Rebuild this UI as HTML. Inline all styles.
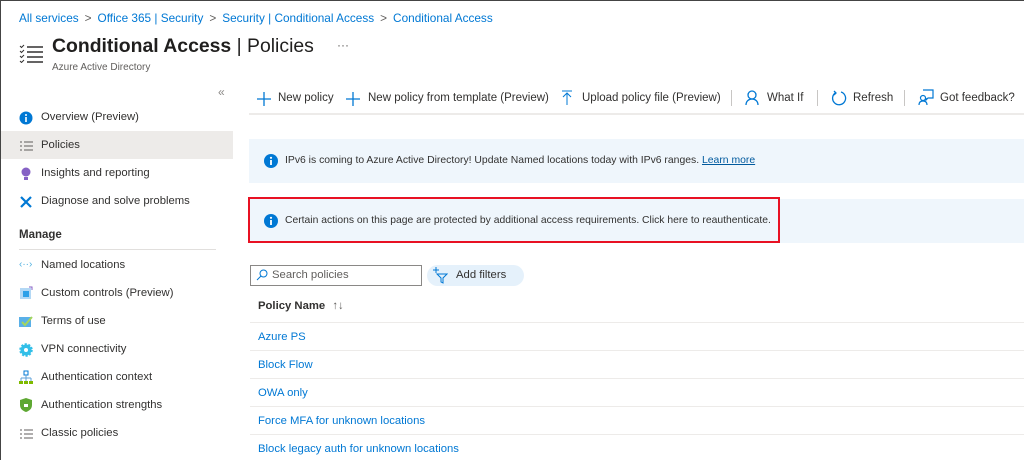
<!DOCTYPE html>
<html><head><style>
*{margin:0;padding:0;box-sizing:border-box}
body{width:1024px;height:460px;overflow:hidden;background:#fff;font-family:"Segoe UI","Liberation Sans",sans-serif;color:#323130;position:relative;border-left:1px solid #444;border-top:1px solid #444}
.a{position:absolute;white-space:nowrap}
.bc{top:10px;left:18px;font-size:11.8px;color:#0078d4}
.bc span{color:#605e5c;margin:0 6px}
.nav{font-size:11.3px;color:#323130}
.tb{top:91px;font-size:11.5px;color:#323130}
.blue{color:#0078d4}
.row{left:257px;font-size:11.3px;color:#0078d4}
.ln{position:absolute;height:1px;background:#edebe9}
</style></head><body>
<div class="a bc">All services<span>&gt;</span>Office 365 | Security<span>&gt;</span>Security | Conditional Access<span>&gt;</span>Conditional Access</div>
<svg class="a" style="left:18px;top:42px" width="26" height="20" viewBox="0 0 26 20" fill="none" stroke="#323130" stroke-width="1.5"><path d="M1 3l1.5 1.5L5 2M1 8l1.5 1.5L5 7M1 13l1.5 1.5L5 12M1 18l1.5 1.5L5 17" stroke-width="1"/><path d="M8 4h16M8 9h16M8 14h16M8 19h16"/></svg>
<div class="a" style="left:51px;top:34px;font-size:19.4px;font-weight:bold;color:#201f1e">Conditional Access <span style="font-weight:normal">| Policies</span></div>
<div class="a" style="left:336px;top:37px;font-size:12px;color:#605e5c">···</div>
<div class="a" style="left:51px;top:61px;font-size:10px;color:#605e5c">Azure Active Directory</div>
<div class="a" style="left:217px;top:84px;font-size:12px;color:#8a8886">«</div>
<div class="a" style="left:0;top:130px;width:232px;height:28px;background:#edebe9"></div>
<svg class="a" style="left:18px;top:110px" width="14" height="14"><circle cx="7" cy="7" r="6.5" fill="#0078d4"/><rect x="6.2" y="6" width="1.6" height="5" fill="#fff"/><circle cx="7" cy="4" r="1" fill="#fff"/></svg>
<div class="a nav" style="left:40px;top:110px">Overview (Preview)</div>
<svg class="a" style="left:18px;top:139px" width="14" height="12" stroke="#605e5c"><path d="M5 2h9M5 6h9M5 10h9M1 2h2M1 6h2M1 10h2"/></svg>
<div class="a nav" style="left:40px;top:138px">Policies</div>
<svg class="a" style="left:20px;top:166px" width="10" height="14"><circle cx="5" cy="5" r="4.5" fill="#8661c5"/><rect x="3" y="10" width="4" height="3" fill="#8661c5"/></svg>
<div class="a nav" style="left:40px;top:166px">Insights and reporting</div>
<svg class="a" style="left:18px;top:194px" width="14" height="14" stroke="#0078d4" stroke-width="2.2"><path d="M2 2l10 10M12 2L2 12"/></svg>
<div class="a nav" style="left:40px;top:194px">Diagnose and solve problems</div>
<div class="a" style="left:18px;top:228px;font-size:11.5px;font-weight:bold">Manage</div>
<div class="ln" style="left:18px;top:248px;width:197px;background:#e1dfdd"></div>
<div class="a" style="left:18px;top:258px;font-size:10px;color:#50b0e0">‹··›</div>
<div class="a nav" style="left:40px;top:258px">Named locations</div>
<svg class="a" style="left:18px;top:285px" width="14" height="14"><rect x="1" y="2" width="11" height="11" fill="#b3d8f5"/><rect x="4" y="5" width="6" height="6" fill="#2ea0e8"/><path d="M10 1h3v3" stroke="#8661c5" fill="none"/></svg>
<div class="a nav" style="left:40px;top:286px">Custom controls (Preview)</div>
<svg class="a" style="left:18px;top:314px" width="14" height="12"><rect x="0" y="2" width="12" height="10" fill="#5ab0e8"/><path d="M3 7l3 3 7-8" stroke="#a4d65e" stroke-width="2" fill="none"/></svg>
<div class="a nav" style="left:40px;top:314px">Terms of use</div>
<svg class="a" style="left:18px;top:342px" width="14" height="14"><circle cx="7" cy="7" r="5.5" fill="#32bfe8" stroke="#32bfe8" stroke-width="2.5" stroke-dasharray="2 1.5"/><circle cx="7" cy="7" r="2" fill="#fff"/></svg>
<div class="a nav" style="left:40px;top:342px">VPN connectivity</div>
<svg class="a" style="left:18px;top:369px" width="14" height="14" fill="none"><rect x="5" y="1" width="4" height="4" stroke="#0078d4"/><path d="M7 5v3M2 8h10M2 8v3M12 8v3M7 8v3" stroke="#5ea0d8"/><rect x="0" y="11" width="4" height="3" fill="#7fba00"/><rect x="5" y="11" width="4" height="3" fill="#7fba00"/><rect x="10" y="11" width="4" height="3" fill="#7fba00"/></svg>
<div class="a nav" style="left:40px;top:370px">Authentication context</div>
<svg class="a" style="left:19px;top:397px" width="12" height="14"><path d="M6 0L12 2v5c0 4-3 6-6 7C3 13 0 11 0 7V2z" fill="#5ea832"/><rect x="4" y="6" width="4" height="3" fill="#fff"/></svg>
<div class="a nav" style="left:40px;top:398px">Authentication strengths</div>
<svg class="a" style="left:18px;top:427px" width="14" height="12" stroke="#605e5c"><path d="M5 2h9M5 6h9M5 10h9M1 2h2M1 6h2M1 10h2"/></svg>
<div class="a nav" style="left:40px;top:426px">Classic policies</div>

<svg class="a" style="left:256px;top:91px" width="14" height="14" stroke="#0078d4" stroke-width="1.3"><path d="M7 0v14M0 7h14"/></svg>
<div class="a tb" style="left:277px">New policy</div>
<svg class="a" style="left:345px;top:91px" width="14" height="14" stroke="#0078d4" stroke-width="1.3"><path d="M7 0v14M0 7h14"/></svg>
<div class="a tb" style="left:367px">New policy from template (Preview)</div>
<svg class="a" style="left:560px;top:89px" width="12" height="16" stroke="#0078d4" fill="none"><path d="M1 1h10M6 3v12M2 7l4-4 4 4"/></svg>
<div class="a tb" style="left:581px">Upload policy file (Preview)</div>
<div class="a" style="left:730px;top:89px;width:1px;height:16px;background:#c8c6c4"></div>
<svg class="a" style="left:744px;top:89px" width="14" height="16" stroke="#0078d4" fill="none" stroke-width="1.3"><circle cx="7" cy="5" r="4"/><path d="M1 15c0-4 3-6 6-6s6 2 6 6"/></svg>
<div class="a tb" style="left:766px">What If</div>
<div class="a" style="left:816px;top:89px;width:1px;height:16px;background:#c8c6c4"></div>
<svg class="a" style="left:830px;top:89px" width="16" height="16" stroke="#0078d4" fill="none" stroke-width="1.3"><path d="M5 2.5A6.5 6.5 0 1 0 10 2"/><path d="M3 1l2 2-2 2" /></svg>
<div class="a tb" style="left:852px">Refresh</div>
<div class="a" style="left:903px;top:89px;width:1px;height:16px;background:#c8c6c4"></div>
<svg class="a" style="left:917px;top:88px" width="16" height="17" stroke="#0078d4" fill="none" stroke-width="1.2"><path d="M5 1h10v8H10l-2 2V9"/><circle cx="5" cy="9" r="2.5"/><path d="M1 16c0-3 2-4 4-4s4 1 4 4"/></svg>
<div class="a tb" style="left:939px">Got feedback?</div>
<div class="ln" style="left:248px;top:112px;width:776px;height:2px;background:#edebe9"></div>

<div class="a" style="left:248px;top:138px;width:776px;height:44px;background:#eff6fc"></div>
<svg class="a" style="left:263px;top:153px" width="14" height="14"><circle cx="7" cy="7" r="7" fill="#0078d4"/><rect x="6.1" y="6" width="1.8" height="5" fill="#fff"/><circle cx="7" cy="3.8" r="1.1" fill="#fff"/></svg>
<div class="a" style="left:284px;top:154px;font-size:10.4px">IPv6 is coming to Azure Active Directory! Update Named locations today with IPv6 ranges. <span style="color:#005a9e;text-decoration:underline">Learn more</span></div>

<div class="a" style="left:248px;top:198px;width:776px;height:44px;background:#eff6fc"></div>
<div class="a" style="left:247px;top:196px;width:532px;height:46px;border:2px solid #e81123"></div>
<svg class="a" style="left:263px;top:213px" width="14" height="14"><circle cx="7" cy="7" r="7" fill="#0078d4"/><rect x="6.1" y="6" width="1.8" height="5" fill="#fff"/><circle cx="7" cy="3.8" r="1.1" fill="#fff"/></svg>
<div class="a" style="left:284px;top:214px;font-size:10.35px">Certain actions on this page are protected by additional access requirements. Click here to reauthenticate.</div>

<div class="a" style="left:249px;top:264px;width:172px;height:21px;border:1px solid #8a8886"></div>
<svg class="a" style="left:255px;top:268px" width="12" height="12" stroke="#0078d4" fill="none"><circle cx="7.5" cy="4.5" r="3.5"/><path d="M5 7l-4 4"/></svg>
<div class="a" style="left:271px;top:268px;font-size:11.3px;color:#605e5c">Search policies</div>
<div class="a" style="left:426px;top:264px;width:97px;height:21px;border-radius:11px;background:#e5f1fb"></div>
<svg class="a" style="left:431px;top:265px" width="16" height="18" stroke="#0078d4" fill="none"><path d="M4 1v6M1 4h6"/><path d="M5 8h10l-4 4v5l-2-1v-4z"/></svg>
<div class="a" style="left:455px;top:268px;font-size:11.3px">Add filters</div>

<div class="a" style="left:257px;top:299px;font-size:11.3px;font-weight:bold">Policy Name <span style="font-weight:normal;color:#605e5c;margin-left:4px">↑↓</span></div>
<div class="ln" style="left:249px;top:321px;width:775px"></div>
<div class="a row" style="top:330px">Azure PS</div>
<div class="ln" style="left:249px;top:349px;width:775px"></div>
<div class="a row" style="top:358px">Block Flow</div>
<div class="ln" style="left:249px;top:377px;width:775px"></div>
<div class="a row" style="top:386px">OWA only</div>
<div class="ln" style="left:249px;top:405px;width:775px"></div>
<div class="a row" style="top:414px">Force MFA for unknown locations</div>
<div class="ln" style="left:249px;top:433px;width:775px"></div>
<div class="a row" style="top:442px">Block legacy auth for unknown locations</div>
</body></html>
